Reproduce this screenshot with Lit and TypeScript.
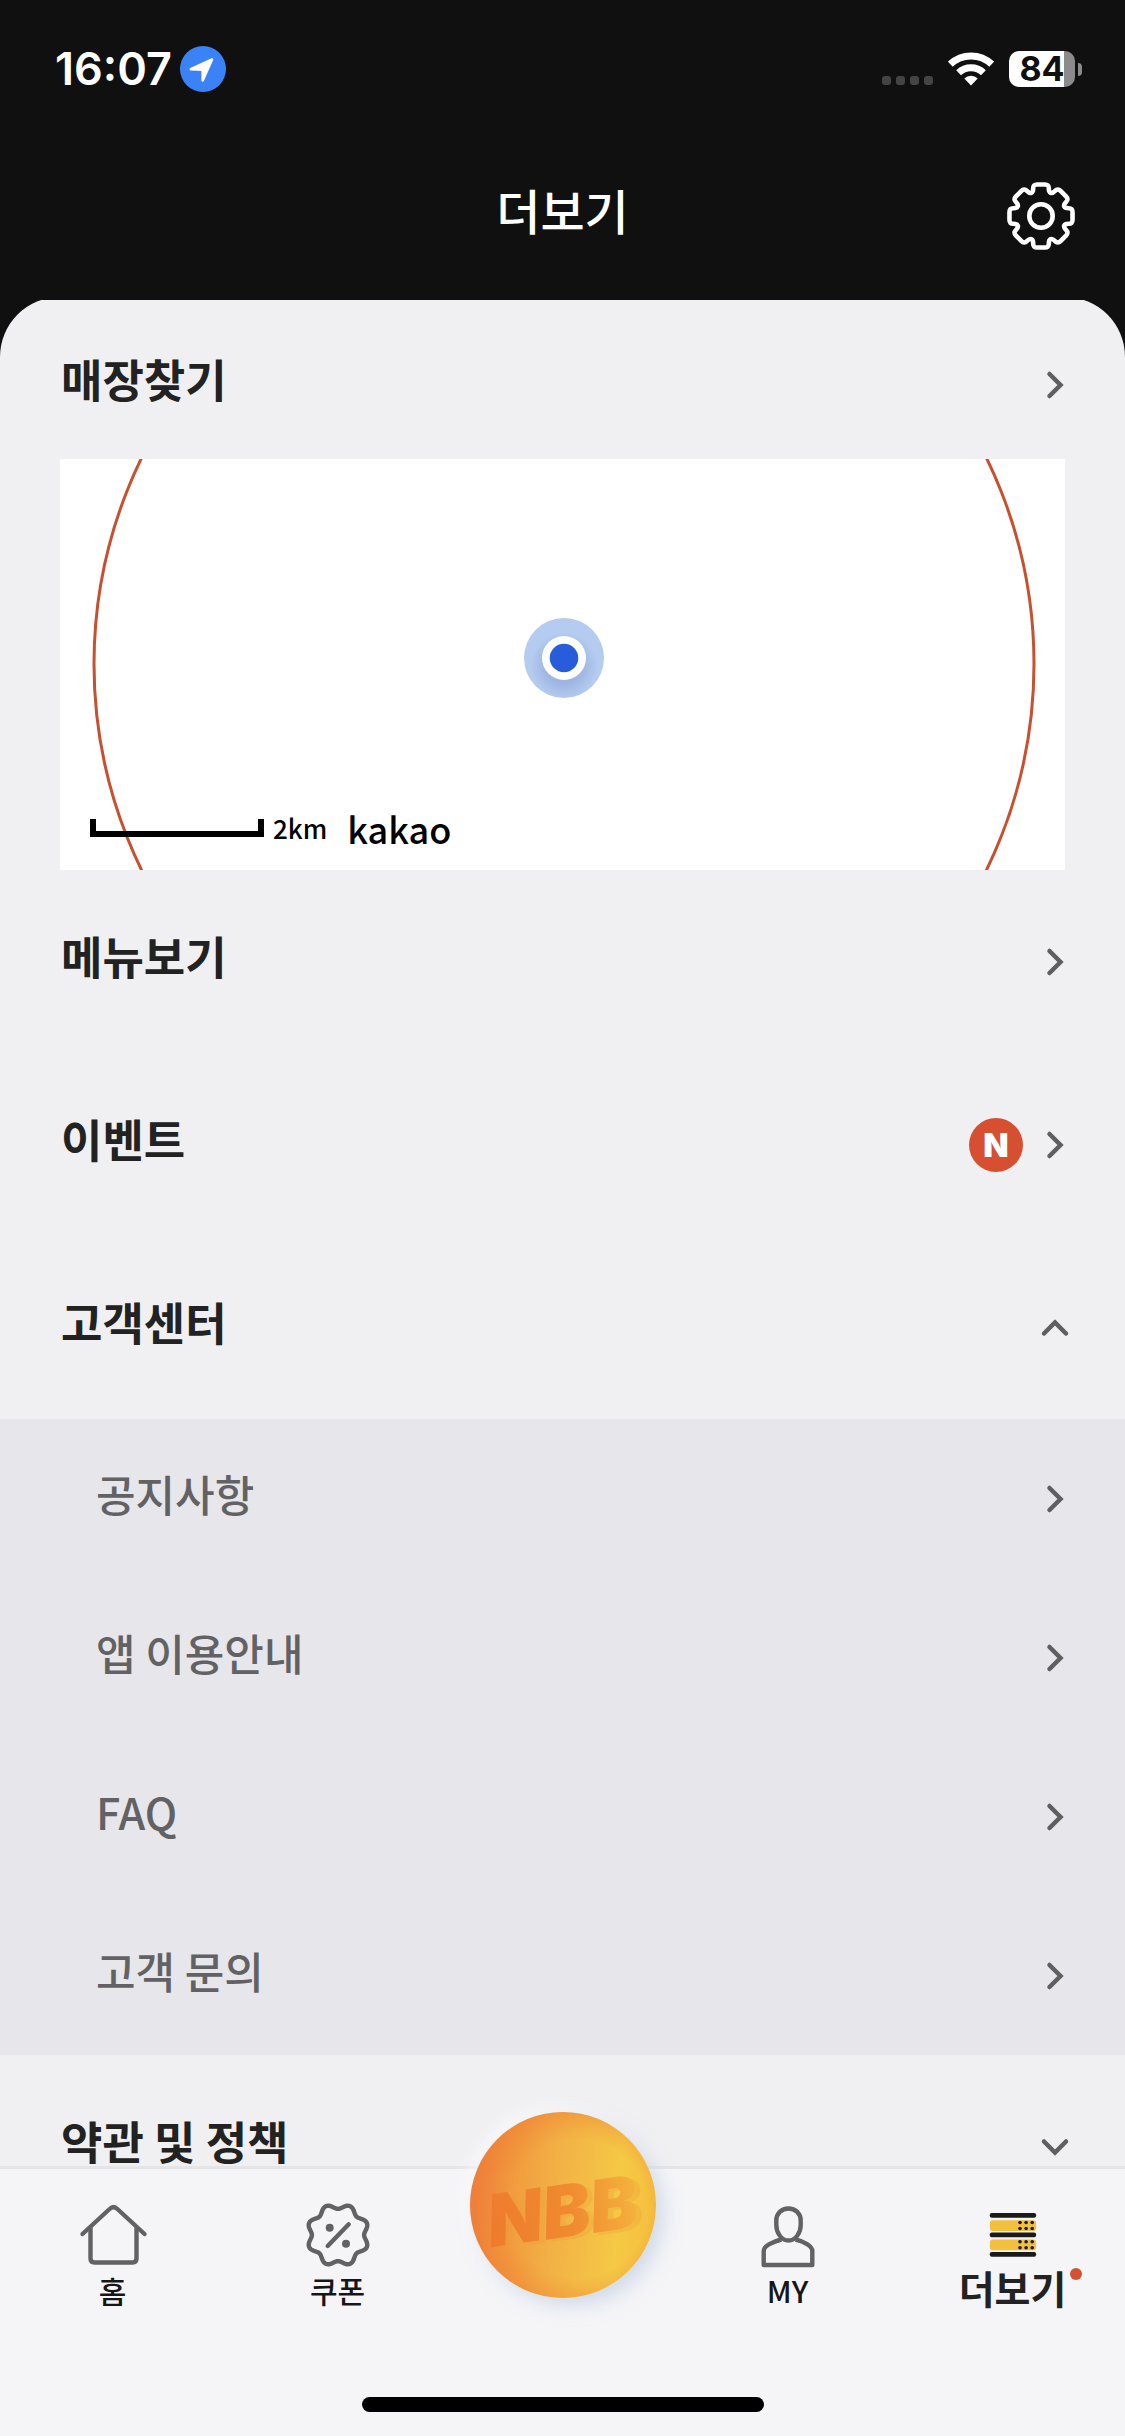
import { LitElement, html, css, svg } from "lit";
import { customElement, property, state } from "lit/decorators.js";

type Point = [number, number];

const polar = (cx: number, cy: number, r: number, deg: number): Point => {
  const a = ((deg - 90) * Math.PI) / 180;
  return [cx + r * Math.cos(a), cy + r * Math.sin(a)];
};

const fmt = (p: Point) => `${p[0].toFixed(2)} ${p[1].toFixed(2)}`;

/** Closed polygon whose corners are rounded by the given distance. */
const roundedPolygon = (pts: Point[], radius: number): string => {
  const n = pts.length;
  const towards = (a: Point, b: Point): Point => {
    const d = Math.hypot(b[0] - a[0], b[1] - a[1]);
    const t = Math.min(radius, d / 2) / d;
    return [a[0] + (b[0] - a[0]) * t, a[1] + (b[1] - a[1]) * t];
  };
  return (
    pts
      .map((p, i) => {
        const from = towards(p, pts[(i + n - 1) % n]);
        const to = towards(p, pts[(i + 1) % n]);
        return `${i ? "L" : "M"}${fmt(from)}Q${fmt(p)} ${fmt(to)}`;
      })
      .join("") + "Z"
  );
};

const gearPath = roundedPolygon(
  Array.from({ length: 8 }, (_, i) => i * 45).flatMap((a) => [
    polar(34, 34, 32.5, a - 14),
    polar(34, 34, 32.5, a + 14),
    polar(34, 34, 25.2, a + 18),
    polar(34, 34, 25.2, a + 27),
  ]),
  4,
);

const sealPath =
  Array.from({ length: 120 }, (_, i) => i * 3)
    .map((deg, i) => {
      const r = 28.7 - 2.6 * Math.cos((8 * deg * Math.PI) / 180);
      return `${i ? "L" : "M"}${fmt(polar(35, 34, r, deg))}`;
    })
    .join("") + "Z";

const chevrons = {
  right: "M12.5 7L23.5 18L12.5 29",
  up: "M7 23.5L18 12.5L29 23.5",
  down: "M7 12.5L18 23.5L29 12.5",
};

@customElement("chevron-icon")
class ChevronIcon extends LitElement {
  @property() direction: keyof typeof chevrons = "right";
  static styles = css`
    :host {
      display: block;
      width: 36px;
      height: 36px;
      flex: none;
    }
    svg {
      display: block;
    }
  `;
  render() {
    return html`<svg width="36" height="36" viewBox="0 0 36 36" fill="none" stroke="#5f5f61"
      stroke-width="4.5" stroke-linecap="round" aria-hidden="true">
      <path d=${chevrons[this.direction]} />
    </svg>`;
  }
}

@customElement("status-bar")
class StatusBar extends LitElement {
  static styles = css`
    :host {
      display: flex;
      justify-content: space-between;
      align-items: center;
      height: 138px;
      padding: 0 43px 0 55px;
      color: #fff;
      font-family: Inter, sans-serif;
    }
    .group {
      display: flex;
      align-items: center;
    }
    .time {
      font-size: 45px;
      font-weight: 600;
      line-height: 54px;
      margin-right: 8px;
    }
    .wifi {
      margin: 0 15px;
    }
    .battery {
      display: flex;
      align-items: center;
      gap: 3px;
    }
    .cell {
      width: 66px;
      height: 36px;
      border-radius: 10px;
      background: linear-gradient(90deg, #fff 83%, #8b8b8b 83%);
      color: #101010;
      font-size: 34px;
      font-weight: 700;
      line-height: 36px;
      text-align: center;
    }
    .nub {
      width: 4px;
      height: 13px;
      border-radius: 0 6px 6px 0;
      background: #8b8b8b;
    }
    svg {
      display: block;
    }
  `;
  render() {
    return html`
      <div class="group">
        <span class="time">16:07</span>
        <svg width="46" height="46" viewBox="0 0 46 46" aria-hidden="true">
          <circle cx="23" cy="23" r="23" fill="#3b82f7" />
          <path d="M32 13.5L22.7 34.5V23.7L10.8 23.2Z" fill="#fff" stroke="#fff"
            stroke-width="2.6" stroke-linejoin="round" />
        </svg>
      </div>
      <div class="group">
        <svg width="51" height="34" viewBox="0 0 51 34" fill="#444" aria-hidden="true">
          ${[0, 14, 28, 42].map((x) => svg`<rect x=${x} y="24" width="9" height="9" rx="3" />`)}
        </svg>
        <svg class="wifi" width="46" height="34" viewBox="0 0 46 34" aria-hidden="true">
          <g fill="none" stroke="#fff" stroke-width="7">
            <path d="M2.3 12.2A30 30 0 0 1 43.7 12.2" />
            <path d="M10.6 20.7A18 18 0 0 1 35.4 20.7" />
          </g>
          <path d="M23 33.5L16.3 26.6A9.5 9.5 0 0 1 29.7 26.6Z" fill="#fff" />
        </svg>
        <div class="battery">
          <div class="cell">84</div>
          <div class="nub"></div>
        </div>
      </div>
    `;
  }
}

@customElement("store-map")
class StoreMap extends LitElement {
  static styles = css`
    :host {
      display: block;
      position: relative;
      margin: 0 60px;
      background: #fff;
      overflow: hidden;
    }
    .canvas {
      display: block;
      width: 100%;
    }
    .legend {
      position: absolute;
      left: 30px;
      bottom: 21px;
      display: flex;
      align-items: center;
      color: #000;
      font-family: "Noto Sans CJK KR", sans-serif;
      font-weight: 500;
      line-height: 42px;
    }
    .scale {
      box-sizing: border-box;
      width: 174px;
      height: 18px;
      border: 6px solid #000;
      border-top: 0;
      margin-right: 9px;
    }
    .distance {
      font-size: 26px;
      margin-right: 20px;
    }
    .brand {
      font-size: 36px;
    }
  `;
  render() {
    return html`
      <svg class="canvas" viewBox="0 0 1005 411" aria-hidden="true">
        <defs>
          <radialGradient id="shade" cx="0.5" cy="0.6" r="0.42">
            <stop offset="0.5" stop-color="#9db5e0" />
            <stop offset="1" stop-color="#b5cbf0" />
          </radialGradient>
        </defs>
        <circle cx="504" cy="205" r="470" fill="none" stroke="#c8502f" stroke-width="3" />
        <circle cx="504" cy="199" r="40" fill="url(#shade)" />
        <circle cx="504" cy="199" r="22" fill="#fff" />
        <circle cx="504" cy="199" r="14.3" fill="#275ddb" />
      </svg>
      <div class="legend">
        <div class="scale"></div>
        <span class="distance">2km</span>
        <span class="brand">kakao</span>
      </div>
    `;
  }
}

@customElement("tab-bar")
class TabBar extends LitElement {
  static styles = css`
    :host {
      display: block;
      flex: none;
      position: relative;
      border-top: 3px solid #e5e5e8;
      background: #f5f5f8;
    }
    .tabs {
      display: grid;
      grid-template-columns: repeat(5, 1fr);
      height: 228px;
    }
    .tab {
      display: flex;
      flex-direction: column;
      align-items: center;
      padding-top: 32px;
      color: #161616;
      font-size: 30px;
      font-weight: 500;
      line-height: 42px;
      text-decoration: none;
    }
    .tab svg {
      flex: none;
    }
    .label {
      position: relative;
    }
    .current {
      color: #222;
      font-size: 39px;
      font-weight: 700;
      line-height: 36px;
    }
    .dot {
      position: absolute;
      left: 100%;
      top: -1px;
      width: 12px;
      height: 12px;
      margin-left: 4px;
      border-radius: 50%;
      background: #d35233;
    }
    .order {
      justify-self: center;
      width: 186px;
      height: 186px;
      margin-top: -57px;
      padding: 0;
      border: 0;
      border-radius: 50%;
      overflow: hidden;
      background:
        radial-gradient(circle at 58% 52%, #f0853400 48%, #ee8036aa 76%),
        linear-gradient(95deg, #f0743f 0%, #f1953c 18%, #f2b045 45%, #f5c945 78%, #f5bd3c 100%);
      box-shadow: 8px 8px 18px #b4c4dc88, -6px -6px 16px #ffffff99;
    }
    .indicator {
      width: 402px;
      height: 15px;
      margin: 0 auto 24px;
      border-radius: 8px;
      background: #000;
    }
    svg {
      display: block;
    }
  `;
  render() {
    return html`
      <nav class="tabs">
        <a class="tab" href="#home">
          <svg width="70" height="68" viewBox="0 0 70 68" fill="none" stroke="#626264"
            stroke-width="4.4" stroke-linecap="round" stroke-linejoin="round" aria-hidden="true">
            <path d="M4.5 33L31.6 8Q35.5 4.2 39.4 8L66.5 33" />
            <path d="M12.5 27V57.5Q12.5 61.5 16.5 61.5H54.5Q58.5 61.5 58.5 57.5V27" />
          </svg>
          <span class="label">홈</span>
        </a>
        <a class="tab" href="#coupon">
          <svg width="70" height="68" viewBox="0 0 70 68" fill="none" stroke="#626264"
            stroke-width="4.4" stroke-linecap="round" stroke-linejoin="round" aria-hidden="true">
            <path d=${sealPath} />
            <path d="M24.7 45L45.7 23.3" />
            <circle cx="26.7" cy="26.7" r="4" fill="#626264" stroke="none" />
            <circle cx="43" cy="42.7" r="4" fill="#626264" stroke="none" />
          </svg>
          <span class="label">쿠폰</span>
        </a>
        <button class="order" type="button" aria-label="NBB">
          <svg width="186" height="186" viewBox="0 0 186 186">
            <defs>
              <linearGradient id="letters" x1="0" x2="1">
                <stop offset="0" stop-color="#ee7b2d" />
                <stop offset="0.55" stop-color="#f08a30" />
                <stop offset="1" stop-color="#f4b33d" />
              </linearGradient>
            </defs>
            <g transform="rotate(-8 93 104)" font-family="Inter, sans-serif" font-size="72"
              font-weight="900" font-style="italic" text-anchor="middle">
              <text x="98" y="128" fill="#ef9a3c" fill-opacity="0.3">NBB</text>
              <text x="93" y="125" fill="url(#letters)">NBB</text>
            </g>
          </svg>
        </button>
        <a class="tab" href="#my">
          <svg width="70" height="68" viewBox="0 0 70 68" fill="none" stroke="#626264"
            stroke-width="4.4" stroke-linejoin="round" aria-hidden="true">
            <path d="M35.5 7.5C42.5 7.5 47.7 12.5 47.7 19.5V24C47.7 32 42.5 39.5 35.5 39.5S23.3 32 23.3 24V19.5C23.3 12.5 28.5 7.5 35.5 7.5Z" />
            <path d="M28.5 38.5C20 40.5 10.7 45 10.7 50V64H59.3V50C59.3 45 51 40.5 42.5 38.5" />
          </svg>
          <span class="label">MY</span>
        </a>
        <a class="tab" href="#more" aria-current="page">
          <svg width="70" height="68" viewBox="0 0 70 68" aria-hidden="true">
            ${[12, 31.4, 51].map(
              (y) => svg`<rect x="11.7" y=${y} width="46.5" height="4.8" rx="2.2" fill="#1b1b1b" />`,
            )}
            ${[19.2, 38.4].map(
              (y) => svg`
                <rect x="11.9" y=${y} width="46.2" height="10.8" rx="3" fill="#f2bf3e" />
                ${[0, 6].flatMap((dy) =>
                  [42, 48.1, 54.2].map(
                    (x) => svg`<circle cx=${x} cy=${y + 2.3 + dy} r="1.8" fill="#1b1b1b" />`,
                  ),
                )}`,
            )}
          </svg>
          <span class="label current">더보기<span class="dot"></span></span>
        </a>
      </nav>
      <div class="indicator"></div>
    `;
  }
}

@customElement("app-root")
class AppRoot extends LitElement {
  @state() private supportOpen = true;
  @state() private termsOpen = false;

  static styles = css`
    :host {
      display: flex;
      flex-direction: column;
      height: 100vh;
      background: #101010;
      color: #222;
      font-family: "Noto Sans CJK KR", sans-serif;
    }
    .header {
      box-sizing: border-box;
      display: grid;
      grid-template-columns: 1fr auto 1fr;
      align-items: center;
      height: 162px;
      padding: 0 50px 6px;
      color: #fff;
      flex: none;
    }
    .title {
      grid-column: 2;
      margin: 0;
      padding-bottom: 14px;
      font-size: 48px;
      font-weight: 500;
      line-height: 60px;
    }
    .settings {
      justify-self: end;
      padding: 0;
      border: 0;
      background: none;
    }
    .settings svg {
      display: block;
    }
    .content {
      flex: 1;
      min-height: 0;
      overflow-y: auto;
      scrollbar-width: none;
    }
    .sheet {
      margin-top: -3px;
      border-radius: 60px 60px 0 0;
      background: #f0f0f3;
    }
    .row {
      box-sizing: border-box;
      display: flex;
      align-items: center;
      gap: 14px;
      width: 100%;
      height: 183px;
      padding: 0 52px 0 61px;
      border: 0;
      background: none;
      color: #222;
      font-family: inherit;
      font-size: 45px;
      font-weight: 700;
      line-height: 54px;
      text-align: left;
      text-decoration: none;
    }
    .row.first {
      height: 162px;
      padding-top: 14px;
    }
    .text {
      flex: 1;
      padding-bottom: 12px;
    }
    .new {
      width: 54px;
      height: 54px;
      border-radius: 50%;
      background: #d64f31;
      color: #fff;
      font-family: Inter, sans-serif;
      font-size: 33px;
      font-weight: 900;
      line-height: 54px;
      text-align: center;
    }
    .submenu {
      background: #e7e7eb;
    }
    .submenu .row {
      height: 159px;
      padding-left: 96px;
      color: #626264;
      font-size: 43px;
      font-weight: 500;
    }
  `;

  render() {
    return html`
      <status-bar></status-bar>
      <header class="header">
        <h1 class="title">더보기</h1>
        <button class="settings" type="button" aria-label="설정">
          <svg width="68" height="68" viewBox="0 0 68 68" fill="none" stroke="#fff"
            stroke-width="4.6" stroke-linejoin="round">
            <path d=${gearPath} />
            <circle cx="34" cy="34" r="11.7" />
          </svg>
        </button>
      </header>
      <main class="content">
        <div class="sheet">
          <a class="row first" href="#stores">
            <span class="text">매장찾기</span><chevron-icon></chevron-icon>
          </a>
          <store-map></store-map>
          <a class="row" href="#menu">
            <span class="text">메뉴보기</span><chevron-icon></chevron-icon>
          </a>
          <a class="row" href="#event">
            <span class="text">이벤트</span><span class="new">N</span><chevron-icon></chevron-icon>
          </a>
          <button class="row" type="button" aria-expanded=${this.supportOpen}
            @click=${() => (this.supportOpen = !this.supportOpen)}>
            <span class="text">고객센터</span>
            <chevron-icon direction=${this.supportOpen ? "up" : "down"}></chevron-icon>
          </button>
          ${this.supportOpen
            ? html`<div class="submenu">
                ${["공지사항", "앱 이용안내", "FAQ", "고객 문의"].map(
                  (label) => html`<a class="row" href="#support">
                    <span class="text">${label}</span><chevron-icon></chevron-icon>
                  </a>`,
                )}
              </div>`
            : null}
          <button class="row" type="button" aria-expanded=${this.termsOpen}
            @click=${() => (this.termsOpen = !this.termsOpen)}>
            <span class="text">약관 및 정책</span>
            <chevron-icon direction=${this.termsOpen ? "up" : "down"}></chevron-icon>
          </button>
        </div>
      </main>
      <tab-bar></tab-bar>
    `;
  }
}
